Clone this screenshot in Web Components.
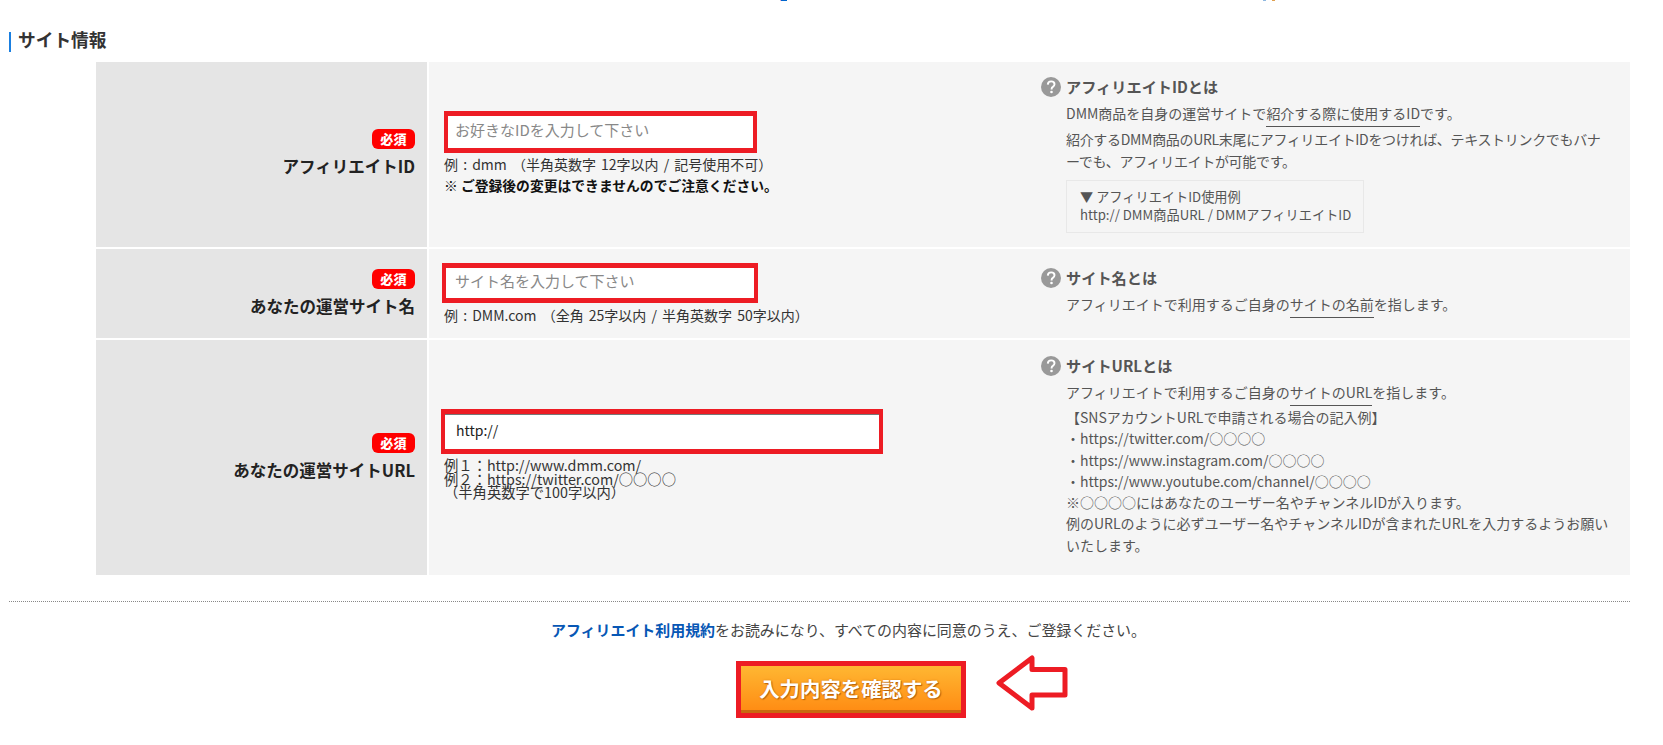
<!DOCTYPE html>
<html lang="ja">
<head>
<meta charset="utf-8">
<title>サイト情報</title>
<style>
  html, body { margin: 0; background: #fff; }
  body { font-family: "Noto Sans CJK JP", "Liberation Sans", sans-serif; color: #333; overflow: hidden; height: 745px; }
</style>
</head>
<body>
<template id="clip-strip">
  <style>
    :host { display: flex; height: 1px; padding-left: 780px; }
    i { display: block; height: 1px; }
  </style>
  <i style="width:1px;background:#e9a6d0"></i><i style="width:6px;background:#0066cc"></i>
  <i style="width:476px"></i>
  <i style="width:3px;background:#8fb8e0"></i><i style="width:6px"></i><i style="width:3px;background:#e0a050"></i>
</template>

<template id="section-head">
  <style>
    :host { display: block; margin: 31px 33px 10px 9px; border-left: 2px solid #1a7fe0; padding-left: 7px; height: 20px; line-height: 14px; font-size: 17.7px; font-weight: 700; color: #333; }
  </style>
  <slot></slot>
</template>

<template id="form-row">
  <style>
    :host { display: grid; grid-template-columns: 331px 1fr; column-gap: 2px; height: var(--row-h); }
    .label { background: #e5e5e5; display: flex; flex-direction: column; align-items: flex-end; padding: var(--label-top) 12px 0 0; box-sizing: border-box; }
    .badge { width: 43px; height: 20px; border-radius: 6px; background: #f00; color: #fff; font-size: 13px; font-weight: 900; line-height: 20px; text-align: center; letter-spacing: .3px; }
    .name { font-size: 16.500px; font-weight: 700; color: #222; line-height: 24px; margin-top: 5px; white-space: nowrap; }
    .body { background: #f5f5f5; display: grid; grid-template-columns: 612px 1fr; }
    .field { padding: var(--field-top) 0 0 15px; }
    .help { padding: var(--help-top) 17px 0 0; }
  </style>
  <div class="label">
    <div class="badge">必須</div>
    <div class="name"><slot name="name"></slot></div>
  </div>
  <div class="body">
    <div class="field"><slot name="field"></slot></div>
    <div class="help"><slot name="help"></slot></div>
  </div>
</template>

<template id="red-input">
  <style>
    :host { box-sizing: border-box; display: flex; align-items: center; border: 4px solid #ed1c24; border-top-width: 5px; border-bottom-width: 5px; background: #fff; font-size: 15px; color: #888; padding: 0 0 5px 9px; }
    :host([filled]) { color: #222; font-size: 14px; padding: 0 0 3px 11px; box-shadow: inset 0 1px 0 #777; }
  </style>
  <slot></slot>
</template>

<template id="help-box">
  <style>
    :host { display: block; font-size: 14px; color: #555; line-height: 22px; line-break: loose; }
    .head { display: flex; align-items: center; gap: 5px; font-size: 15.200px; font-weight: 700; height: 20px; line-height: 20px; margin-bottom: 5px; color: #555; }
    .title { margin-top: -3px; }
    .content { padding-left: 25px; }
    svg { flex: none; display: block; }
  </style>
  <div class="head">
    <svg width="20" height="20" viewBox="0 0 20 20"><circle cx="10" cy="10" r="10" fill="#999"/><path d="M6.800 7.600c.1-2 1.500-3.200 3.400-3.200 1.900 0 3.300 1.100 3.300 2.800 0 1.300-.7 2-1.700 2.700-.9.600-1.200 1-1.200 2v.5" fill="none" stroke="#fff" stroke-width="1.900"/><circle cx="10.500" cy="15" r="1.300" fill="#fff"/></svg>
    <div class="title"><slot name="title"></slot></div>
  </div>
  <div class="content"><slot></slot></div>
</template>

<template id="submit-area">
  <style>
    :host { display: block; margin: 26px 33px 0 9px; border-top: 1px dotted #888; }
    .terms { margin: 17px 0 0 542px; font-size: 14.950px; line-height: 22px; color: #444; white-space: nowrap; }
    .actions { display: flex; align-items: flex-start; margin: 20px 0 0 727px; }
    .btn { box-sizing: border-box; width: 230px; height: 57px; border: 5px solid #ed1c24; background: linear-gradient(#ffb732, #ff8a12); box-shadow: inset 0 -3px 0 #c8690f; display: flex; align-items: center; justify-content: center; padding-bottom: 3px; color: #fff; font-size: 20.400px; font-weight: 700; text-shadow: 1px 1px 1px #b8630c, 0 0 2px #d07a10; white-space: nowrap; }
    svg { display: block; margin: -7px 0 0 29px; }
  </style>
  <div class="terms"><slot name="terms"></slot></div>
  <div class="actions">
    <div class="btn"><slot name="button"></slot></div>
    <svg width="74" height="58" viewBox="0 0 74 58"><path d="M4 29 L37 4 L37 15.500 L70 15.500 L70 41 L37 41 L37 54 Z" fill="#fff" stroke="#ed1c24" stroke-width="5" stroke-linejoin="round"/></svg>
  </div>
</template>

<style>
  form-table { margin-left: 96px; margin-right: 33px; }
  .ex { font-size: 14px; line-height: 21px; color: #333; margin: 1px 0 0; word-spacing: 2px; white-space: nowrap; }
  .ex.tight { font-size: 14.300px; line-height: 13.500px; margin-top: 4px; word-spacing: 0; }
  .warn { font-size: 13.800px; line-height: 21px; font-weight: 700; color: #111; white-space: nowrap; }
  p.h { margin: 0; }
  .ul { padding-bottom: 3px; border-bottom: 1px solid #555; }
  .note { box-sizing: border-box; margin-top: 8px; width: 298px; height: 53px; border: 1px solid #e8e8e8; padding: 7px 0 0 13px; font-size: 13.200px; line-height: 18px; white-space: nowrap; }
  a { color: #0757b5; font-weight: 700; text-decoration: none; }
</style>

<clip-strip></clip-strip>
<section-head>サイト情報</section-head>
<form-table>
  <form-row style="--row-h:185px;--label-top:67px;--field-top:49px;--help-top:15px">
    <span slot="name">アフィリエイトID</span>
    <div slot="field">
      <red-input style="width:313px;height:42px;padding-left:7px">お好きなIDを入力して下さい</red-input>
      <div class="ex">例 : dmm （半角英数字 12字以内 / 記号使用不可）</div>
      <div class="warn">※ ご登録後の変更はできませんのでご注意ください。</div>
    </div>
    <help-box slot="help">
      <span slot="title">アフィリエイトIDとは</span>
      <p class="h">DMM商品を自身の運営サイトで<span class="ul">紹介する際に使用するID</span>です。</p>
      <p class="h" style="margin-top:4px;letter-spacing:-.32px">紹介するDMM商品のURL末尾にアフィリエイトIDをつければ、テキストリンクでもバナーでも、アフィリエイトが可能です。</p>
      <div class="note">▼ アフィリエイトID使用例<br>http:// DMM商品URL / DMMアフィリエイトID</div>
    </help-box>
  </form-row>
  <form-row style="--row-h:89px;--label-top:20px;--field-top:14px;--help-top:19px">
    <span slot="name">あなたの運営サイト名</span>
    <div slot="field">
      <red-input style="width:316px;height:40px;margin-left:-2px">サイト名を入力して下さい</red-input>
      <div class="ex" style="margin-top:2px">例 : DMM.com （全角 25字以内 / 半角英数字 50字以内）</div>
    </div>
    <help-box slot="help">
      <span slot="title">サイト名とは</span>
      <p class="h">アフィリエイトで利用するご自身の<span class="ul">サイトの名前</span>を指します。</p>
    </help-box>
  </form-row>
  <form-row style="--row-h:235px;--label-top:93px;--field-top:69px;--help-top:16px">
    <span slot="name">あなたの運営サイトURL</span>
    <div slot="field">
      <red-input filled style="width:442px;height:45px;margin-left:-3px">http://</red-input>
      <div class="ex tight">例１：http://www.dmm.com/<br>例２：https://twitter.com/○○○○<br>（半角英数字で100字以内）</div>
    </div>
    <help-box slot="help">
      <span slot="title">サイトURLとは</span>
      <p class="h">アフィリエイトで利用するご自身の<span class="ul">サイトのURL</span>を指します。</p>
      <div style="margin-top:4px;line-height:21.300px">【SNSアカウントURLで申請される場合の記入例】<br>・https://twitter.com/○○○○<br>・https://www.instagram.com/○○○○<br>・https://www.youtube.com/channel/○○○○<br>※○○○○にはあなたのユーザー名やチャンネルIDが入ります。<br>例のURLのように必ずユーザー名やチャンネルIDが含まれたURLを入力するようお願いいたします。</div>
    </help-box>
  </form-row>
</form-table>
<submit-area>
  <span slot="terms"><a href="#">アフィリエイト利用規約</a>をお読みになり、すべての内容に同意のうえ、ご登録ください。</span>
  <span slot="button">入力内容を確認する</span>
</submit-area>

<script>
  // simple template-cloning elements
  class TemplateElement extends HTMLElement {
    constructor() {
      super();
      const tpl = document.getElementById(this.constructor.templateId);
      this.attachShadow({ mode: "open" }).appendChild(tpl.content.cloneNode(true));
    }
  }
  const define = (name, id) => customElements.define(name, class extends TemplateElement {
    static get templateId() { return id; }
  });
  define("clip-strip", "clip-strip");
  define("section-head", "section-head");
  define("form-row", "form-row");
  define("red-input", "red-input");
  define("help-box", "help-box");
  define("submit-area", "submit-area");
  customElements.define("form-table", class extends HTMLElement {
    constructor() {
      super();
      this.attachShadow({ mode: "open" }).innerHTML = "<style>:host{display:flex;flex-direction:column;gap:2px}</style><slot></slot>";
    }
  });
</script>
</body>
</html>
